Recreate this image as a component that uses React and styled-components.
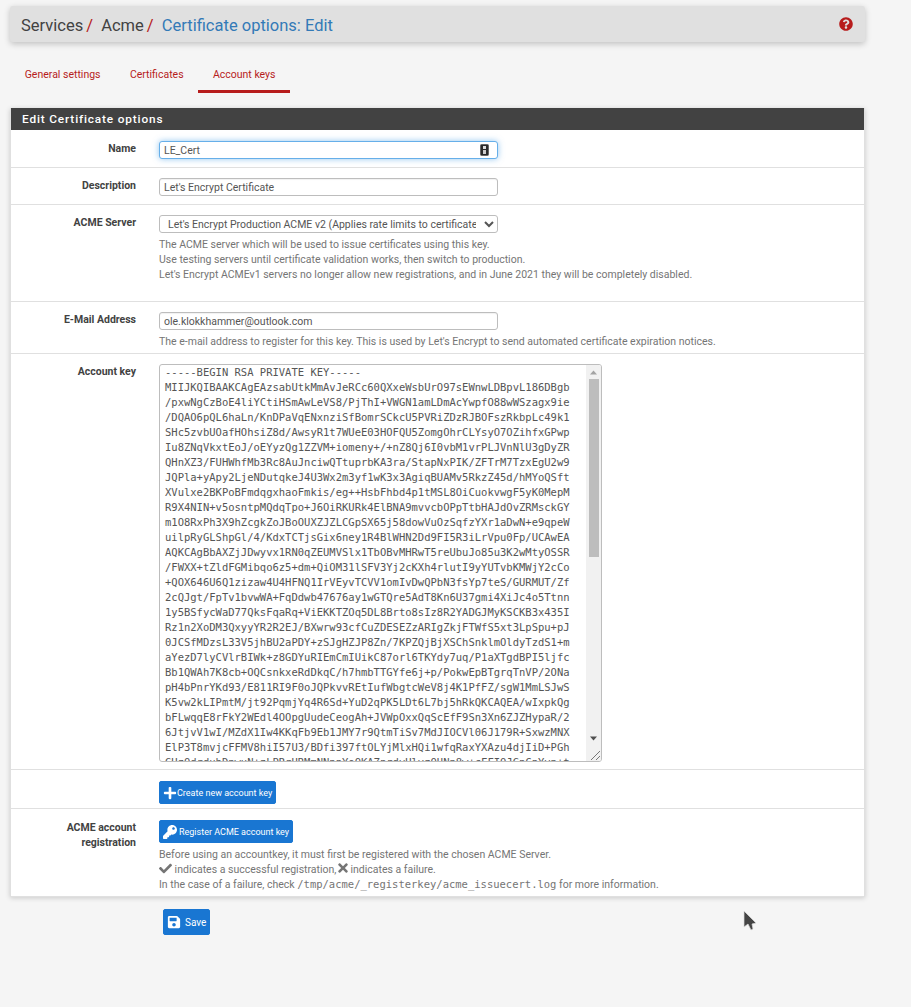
import React from 'react';
import styled, { createGlobalStyle } from 'styled-components';
import { FaPlus, FaKey, FaSave, FaCheck, FaTimes, FaQuestionCircle } from 'react-icons/fa';

const Global = createGlobalStyle`
  html, body { margin: 0; padding: 0; background: #f5f5f5; }
  body { font-family: Roboto, "Liberation Sans", sans-serif; font-size: 10.5px; color: #424242; min-height: 1007px; overflow: hidden; }
`;

const Page = styled.div`
  position: relative;
  width: 855px;
  padding: 6px 46px 0 10px;
`;

const TitleBar = styled.header`
  height: 36px;
  box-sizing: border-box;
  padding: 2px 11px 0;
  background: #e0e0e0;
  border-radius: 3px;
  box-shadow: 0 2px 6px rgba(0,0,0,.22);
  display: flex;
  align-items: center;
  justify-content: space-between;
  font-size: 16.5px;
  margin-bottom: 17px;
`;

const Crumbs = styled.div`
  display: flex;
  align-items: center;
  white-space: pre;
`;

const Slash = styled.span`
  color: #b71c1c;
  margin: 0 8.2px 0 3px;
`;

const Current = styled.span`
  color: #337ab7;
`;

const Help = styled.span`
  display: flex;
  color: #b71c1c;
  font-size: 14px;
  margin: -2px 1px 0 0;
`;

const Tabs = styled.nav`
  display: flex;
  height: 34px;
  margin-bottom: 15px;
`;

const Tab = styled.a`
  color: #b71c1c;
  padding: 0 14.7px;
  height: 31px;
  line-height: 31px;
  border-bottom: 3px solid ${p => p.$active ? '#b71c1c' : 'transparent'};
  font-size: 10.5px;
`;

const Panel = styled.section`
  background: #fff;
  box-shadow: 0 1px 5px rgba(0,0,0,.18);
  border: 1px solid #e0e0e0;
  border-top: 0;
`;

const PanelHead = styled.h2`
  margin: 0;
  height: 22px;
  line-height: 22px;
  background: #424242;
  color: #fff;
  font-size: 11.8px;
  font-weight: 500;
  letter-spacing: .85px;
  padding-left: 11px;
`;

const Row = styled.div`
  display: grid;
  grid-template-columns: 125px 1fr;
  column-gap: 23px;
  min-height: ${p => p.$h}px;
  box-sizing: border-box;
  padding-top: ${p => p.$top ?? 10}px;
  border-bottom: ${p => p.$last ? 0 : '1px solid #e0e0e0'};
`;

const Label = styled.label`
  text-align: right;
  font-weight: 700;
  line-height: 15px;
`;

const Field = styled.div`
  min-width: 0;
`;

const InputWrap = styled.div`
  position: relative;
  width: 339px;
`;

const Input = styled.input`
  display: block;
  box-sizing: border-box;
  width: 339px;
  height: 18px;
  padding: 0 4px;
  border: 1px solid ${p => p.$focus ? '#66afe9' : '#bdbdbd'};
  border-radius: 3px;
  background: #fff;
  color: #555;
  font: 10.5px Roboto, sans-serif;
  outline: 0;
  box-shadow: ${p => p.$focus ? '0 0 6px rgba(102,175,233,.7)' : 'inset 0 1px 1px rgba(0,0,0,.06)'};
`;

const LockIcon = styled.svg`
  position: absolute;
  right: 9px;
  top: 3px;
`;

const Select = styled.select`
  display: block;
  box-sizing: border-box;
  width: 339px;
  height: 18px;
  padding: 0 5px 0 4px;
  border: 1px solid #bdbdbd;
  border-radius: 3px;
  background: #fff;
  color: #555;
  font: 10.5px Roboto, sans-serif;
`;

const Hint = styled.div`
  margin-top: 4px;
  color: #757575;
  line-height: 15px;
  white-space: nowrap;
`;

const Code = styled.code`
  font-family: "DejaVu Sans Mono", monospace;
  font-size: 10.5px;
`;

const HintIcon = styled.span`
  display: inline-block;
  height: 8px;
  font-size: ${p => p.$size}px;
  margin-right: ${p => p.$gap}px;

  svg {
    display: block;
    margin: ${p => p.$top}px 0 -2px;
  }
`;

const KeyWrap = styled.div`
  position: relative;
  width: 443px;
  height: 398px;
`;

const KeyArea = styled.textarea`
  display: block;
  box-sizing: border-box;
  width: 443px;
  height: 398px;
  padding: 0 5px;
  border: 1px solid #bdbdbd;
  border-radius: 3px;
  color: #555;
  background: #fff;
  font-family: "DejaVu Sans Mono", monospace;
  font-size: 10.5px;
  line-height: 15px;
  overflow: hidden;
  white-space: pre;
  resize: none;
  outline: 0;
`;

const ScrollBar = styled.div`
  position: absolute;
  top: 1px;
  right: 1px;
  bottom: 1px;
  width: 15px;
  background: #f1f1f1;
  border-radius: 0 2px 2px 0;
  display: flex;
  flex-direction: column;
`;

const ScrollButton = styled.svg`
  display: block;
  flex: none;
  width: 15px;
  height: 15px;
`;

const ScrollTrack = styled.div`
  flex: 1;
  padding: 0 2.5px;
`;

const ScrollThumb = styled.div`
  height: 178px;
  background: #bdbdbd;
  margin-top: -1px;
`;

const KEY = `-----BEGIN RSA PRIVATE KEY-----
MIIJKQIBAAKCAgEAzsabUtkMmAvJeRCc60QXxeWsbUrO97sEWnwLDBpvL186DBgb
/pxwNgCzBoE4liYCtiHSmAwLeVS8/PjThI+VWGN1amLDmAcYwpfO88wWSzagx9ie
/DQAO6pQL6haLn/KnDPaVqENxnziSfBomrSCkcU5PVRiZDzRJBOFszRkbpLc49k1
SHc5zvbUOafHOhsiZ8d/AwsyR1t7WUeE03HOFQU5ZomgOhrCLYsyO7OZihfxGPwp
Iu8ZNqVkxtEoJ/oEYyzQg1ZZVM+iomeny+/+nZ8Qj6I0vbM1vrPLJVnNlU3gDyZR
QHnXZ3/FUHWhfMb3Rc8AuJnciwQTtuprbKA3ra/StapNxPIK/ZFTrM7TzxEgU2w9
JQPla+yApy2LjeNDutqkeJ4U3Wx2m3yf1wK3x3AgiqBUAMv5RkzZ45d/hMYoQSft
XVulxe2BKPoBFmdqgxhaoFmkis/eg++HsbFhbd4p1tMSL8OiCuokvwgF5yK0MepM
R9X4NIN+v5osntpMQdqTpo+J6OiRKURk4ElBNA9mvvcbOPpTtbHAJdOvZRMsckGY
m1O8RxPh3X9hZcgkZoJBoOUXZJZLCGpSX65j58dowVuOzSqfzYXr1aDwN+e9qpeW
uilpRyGLShpGl/4/KdxTCTjsGix6ney1R4BlWHN2Dd9FI5R3iLrVpu0Fp/UCAwEA
AQKCAgBbAXZjJDwyvx1RN0qZEUMVSlx1TbOBvMHRwT5reUbuJo85u3K2wMtyOSSR
/FWXX+tZldFGMibqo6z5+dm+QiOM31lSFV3Yj2cKXh4rlutI9yYUTvbKMWjY2cCo
+QOX646U6Q1zizaw4U4HFNQ1IrVEyvTCVV1omIvDwQPbN3fsYp7teS/GURMUT/Zf
2cQJgt/FpTv1bvwWA+FqDdwb47676ay1wGTQre5AdT8Kn6U37gmi4XiJc4o5Ttnn
1y5BSfycWaD77QksFqaRq+ViEKKTZOq5DL8Brto8sIz8R2YADGJMyKSCKB3x435I
Rz1n2XoDM3QxyyYR2R2EJ/BXwrw93cfCuZDESEZzARIgZkjFTWfS5xt3LpSpu+pJ
0JCSfMDzsL33V5jhBU2aPDY+zSJgHZJP8Zn/7KPZQjBjXSChSnklmOldyTzdS1+m
aYezD7lyCVlrBIWk+z8GDYuRIEmCmIUikC87orl6TKYdy7uq/P1aXTgdBPI5ljfc
Bb1QWAh7K8cb+OQCsnkxeRdDkqC/h7hmbTTGYfe6j+p/PokwEpBTgrqTnVP/2ONa
pH4bPnrYKd93/E811RI9F0oJQPkvvREtIufWbgtcWeV8j4K1PfFZ/sgW1MmLSJwS
K5vw2kLIPmtM/jt92PqmjYq4R6Sd+YuD2qPK5LDt6L7bj5hRkQKCAQEA/wIxpkQg
bFLwqqE8rFkY2WEdl4OOpgUudeCeogAh+JVWpOxxQqScEfF9Sn3Xn6ZJZHypaR/2
6JtjvV1wI/MZdX1Iw4KKqFb9Eb1JMY7r9QtmTiSv7MdJIOCVl06J179R+SxwzMNX
ElP3T8mvjcFFMV8hiI57U3/BDfi397ftOLYjMlxHQi1wfqRaxYXAzu4djIiD+PGh
GHzOdrduhDnwuN+zLPRrURMmNNnnYoOKAZnrdvHlvzOUNn8w+cFFIOJGnCnYvn+t`;

const Button = styled.button`
  display: inline-flex;
  align-items: center;
  box-sizing: border-box;
  height: ${p => p.$h || 23}px;
  padding: 0 ${p => p.$pad || 3}px;
  gap: ${p => p.$gap ?? 2}px;
  border: 1px solid #1976d2;
  border-radius: 2px;
  background: #1976d2;
  color: #fff;
  font: ${p => p.$size || 9}px Roboto, sans-serif;
  white-space: nowrap;
`;

const BtnIcon = styled.span`
  display: inline-flex;
  font-size: ${p => p.$size || 14}px;
`;

const SaveBar = styled.div`
  padding: 12px 0 0 153px;
`;

const Pointer = styled.svg`
  position: absolute;
  left: 743px;
  top: 910px;
`;

export default function App() {
  return (
    <Page>
      <Global />
      <TitleBar>
        <Crumbs>
          Services<Slash>/</Slash>Acme<Slash>/</Slash><Current>Certificate options: Edit</Current>
        </Crumbs>
        <Help><FaQuestionCircle /></Help>
      </TitleBar>
      <Tabs>
        <Tab>General settings</Tab>
        <Tab>Certificates</Tab>
        <Tab $active>Account keys</Tab>
      </Tabs>
      <Panel>
        <PanelHead>Edit Certificate options</PanelHead>
        <Row $h={38} $top={11}>
          <Label>Name</Label>
          <Field>
            <InputWrap>
              <Input $focus defaultValue="LE_Cert" />
              <LockIcon width="9" height="12" viewBox="0 0 9 12">
                <rect x="0.5" y="0.5" width="8" height="11" rx="1" fill="#2a2a2a" stroke="#666" />
                <rect x="3" y="2" width="3" height="3" fill="#ddd" />
                <rect x="3" y="6" width="3" height="4" fill="#ccc" />
              </LockIcon>
            </InputWrap>
          </Field>
        </Row>
        <Row $h={37}>
          <Label>Description</Label>
          <Field><Input defaultValue="Let's Encrypt Certificate" /></Field>
        </Row>
        <Row $h={97}>
          <Label>ACME Server</Label>
          <Field>
            <Select defaultValue="p">
              <option value="p">Let's Encrypt Production ACME v2 (Applies rate limits to certificate requests)</option>
            </Select>
            <Hint>
              The ACME server which will be used to issue certificates using this key.<br />
              Use testing servers until certificate validation works, then switch to production.<br />
              Let's Encrypt ACMEv1 servers no longer allow new registrations, and in June 2021 they will be completely disabled.
            </Hint>
          </Field>
        </Row>
        <Row $h={52}>
          <Label>E-Mail Address</Label>
          <Field>
            <Input defaultValue="ole.klokkhammer@outlook.com" />
            <Hint>The e-mail address to register for this key. This is used by Let's Encrypt to send automated certificate expiration notices.</Hint>
          </Field>
        </Row>
        <Row $h={416}>
          <Label>Account key</Label>
          <Field>
            <KeyWrap>
              <KeyArea readOnly defaultValue={KEY} />
              <ScrollBar>
                <ScrollButton viewBox="0 0 15 15"><path d="M4 9.5 L7.5 5.5 L11 9.5 Z" fill="#a3a3a3" /></ScrollButton>
                <ScrollTrack><ScrollThumb /></ScrollTrack>
                <ScrollButton viewBox="0 0 15 15"><path d="M4 5.5 L7.5 9.5 L11 5.5 Z" fill="#505050" /></ScrollButton>
                <ScrollButton viewBox="0 0 15 15">
                  <path d="M5 14 L14 5 M10 14 L14 10" stroke="#777" strokeWidth="1" fill="none" />
                </ScrollButton>
              </ScrollBar>
            </KeyWrap>
          </Field>
        </Row>
        <Row $h={39} $top={11}>
          <span />
          <Field>
            <Button $gap={0}><BtnIcon><FaPlus /></BtnIcon>Create new account key</Button>
          </Field>
        </Row>
        <Row $h={87} $top={11} $last>
          <Label>ACME account<br />registration</Label>
          <Field>
            <Button><BtnIcon><FaKey /></BtnIcon>Register ACME account key</Button>
            <Hint>
              Before using an accountkey, it must first be registered with the chosen ACME Server.<br />
              <HintIcon $size={13} $gap={0} $top={-3}><FaCheck /></HintIcon> indicates a successful registration,<HintIcon $size={14} $gap={0} $top={-4}><FaTimes /></HintIcon>indicates a failure.<br />
              In the case of a failure, check <Code>/tmp/acme/_registerkey/acme_issuecert.log</Code> for more information.
            </Hint>
          </Field>
        </Row>
      </Panel>
      <SaveBar>
        <Button $h={26} $size={10} $gap={4}><BtnIcon><FaSave /></BtnIcon>Save</Button>
      </SaveBar>
      <Pointer width="14" height="22" viewBox="0 0 14 22">
        <path d="M1 1 L1 17 L5 14 L8 20 L10 19 L9 14 L13 13 Z" fill="#444" stroke="#ddd" strokeWidth=".7" />
      </Pointer>
    </Page>
  );
}
